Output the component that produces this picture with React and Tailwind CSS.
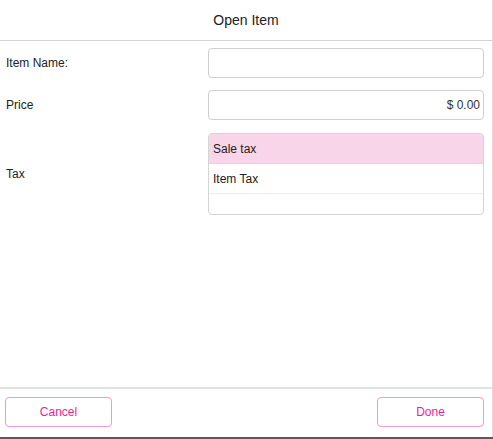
export default function App() {
  return (
    <div className="w-[493px] h-[439px] bg-[#5a5a5a] font-['Liberation_Sans',Arial,sans-serif]">
      <div className="h-[437px] bg-white flex flex-col border-r border-[#dcdcdc]">
        <div className="h-[41px] flex items-center justify-center border-b border-[#d2d2d2] shrink-0">
          <span className="text-[14px] text-[#222]">Open Item</span>
        </div>

        <div className="flex-1 pt-[7px] pl-[6px] pr-[8px] flex flex-col gap-[12px]">
          <div className="flex items-center">
            <div className="w-[202px] text-[12px] text-[#222]">Item Name:</div>
            <div className="flex-1 h-[30px] rounded-[4px] border border-[#cfcfcf]"></div>
          </div>

          <div className="flex items-center">
            <div className="w-[202px] text-[12px] text-[#222]">Price</div>
            <div className="flex-1 h-[30px] rounded-[4px] border border-[#cfcfcf] flex items-center justify-end pr-[3px] text-[12px] text-[#333]">
              $ 0.00
            </div>
          </div>

          <div className="flex items-center mt-[1px]">
            <div className="w-[202px] text-[12px] text-[#222]">Tax</div>
            <div className="flex-1 rounded-[4px] border border-[#d4d4d4] overflow-hidden flex flex-col">
              <div className="h-[30px] bg-[#f9d5ea] flex items-center pl-[4px] text-[12px] text-[#222] border-b border-[#ead0de]">
                Sale tax
              </div>
              <div className="h-[30px] flex items-center pl-[4px] text-[12px] text-[#222] border-b border-[#ececec]">
                Item Tax
              </div>
              <div className="h-[20px]"></div>
            </div>
          </div>
        </div>

        <div className="h-[50px] shrink-0 border-t-2 border-[#e2e2e2] flex items-center justify-between pl-[5px] pr-[8px] pb-[2px]">
          <button className="w-[107px] h-[30px] rounded-[4px] border border-[#f597d2] text-[12px] text-[#ea1f94] bg-white">
            Cancel
          </button>
          <button className="w-[107px] h-[30px] rounded-[4px] border border-[#f597d2] text-[12px] text-[#ea1f94] bg-white">
            Done
          </button>
        </div>
      </div>
    </div>
  );
}
